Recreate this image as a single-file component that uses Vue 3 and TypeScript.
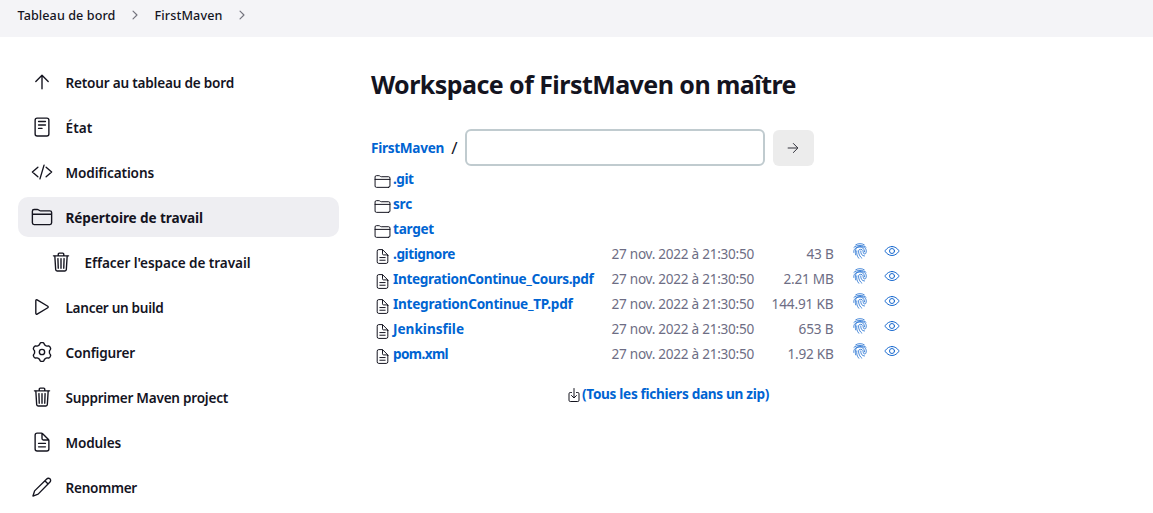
<script setup lang="ts">
import { ref, type Directive } from 'vue'

interface Task { label: string; icon: string; width: number; active?: boolean; nested?: boolean }
interface Entry { name: string; width: number; size?: string; sizeWidth?: number }

// Spreads the letters of a label so that it takes the given width.
const vFit: Directive<HTMLElement, number> = {
  mounted(el, binding) {
    const natural = el.getBoundingClientRect().width
    const count = (el.textContent ?? '').length
    el.style.letterSpacing = `${(binding.value - natural) / count}px`
  },
}

const gear = (() => {
  const points: string[] = []
  for (let i = 0; i < 120; i++) {
    const a = (i / 120) * Math.PI * 2
    const c = Math.cos(6 * (a - Math.PI / 2))
    const r = 196 + 21 * Math.tanh(2 * c) + 3 * c
    points.push(`${(256 + r * Math.cos(a)).toFixed(1)} ${(256 + r * Math.sin(a)).toFixed(1)}`)
  }
  return `M${points.join('L')}Z M318 256a62 62 0 11-124 0a62 62 0 11124 0z`
})()

const icons: Record<string, string> = {
  up: 'M112 244l144-144 144 144M256 120v292',
  reader: 'M144 48h224a48 48 0 0148 48v320a48 48 0 01-48 48H144a48 48 0 01-48-48V96a48 48 0 0148-48zM176 128h160M176 208h160M176 288h80',
  code: 'M160 368L32 256l128-112M352 368l128-112-128-112M304 96l-96 320',
  folder: 'M440 432H72a40 40 0 01-40-40V120a40 40 0 0140-40h75.89a40 40 0 0122.19 6.72l27.84 18.56a40 40 0 0022.19 6.72H440a40 40 0 0140 40v240a40 40 0 01-40 40zM32 192h448',
  trash: 'M112 112l20 320c.95 18.49 14.4 32 32 32h184c17.67 0 30.87-13.51 32-32l20-320M80 112h352M192 112V72a24 24 0 0124-24h80a24 24 0 0124 24v40M256 176v224M184 176l8 224M328 176l-8 224',
  play: 'M112 111v290c0 17.44 17 28.52 31 20.16l247.9-148.37c12.12-7.25 12.12-26.33 0-33.58L143 90.84c-14-8.36-31 2.72-31 20.16z',
  gear,
  document: 'M416 221.25V416a48 48 0 01-48 48H144a48 48 0 01-48-48V96a48 48 0 0148-48h98.75a32 32 0 0122.62 9.37l141.26 141.26a32 32 0 019.37 22.62zM256 56v120a32 32 0 0032 32h120M176 288h160M176 368h160',
  pencil: 'M46 466L84 346 366 68c20-20 52-24 74-2 22 22 22 54 2 74L166 422zM322 112l76 76',
  right: 'M268 112l144 144-144 144M392 256H100',
  chevron: 'M184 112l144 144-144 144',
  eye: 'M255.66 112c-77.94 0-157.89 45.11-220.83 135.33a16 16 0 00-.27 17.77C82.92 340.8 161.8 400 255.66 400c92.84 0 173.34-59.38 221.79-135.25a16.14 16.14 0 000-17.47C428.89 172.28 347.8 112 255.66 112zM336 256a80 80 0 11-160 0a80 80 0 11160 0z',
  download: 'M336 176h40a40 40 0 0140 40v208a40 40 0 01-40 40H136a40 40 0 01-40-40V216a40 40 0 0140-40h40M176 272l80 80 80-80M256 48v288',
  finger: 'M120 56C200 8 312 8 392 56M62 138C150 56 362 56 450 138M56 300C30 60 456 54 456 250C456 320 440 350 406 350C350 350 366 290 350 246C330 186 214 186 210 250C206 350 250 440 316 488M118 380C86 254 112 142 222 130C330 120 396 180 402 280M216 488C158 418 140 342 154 250M280 256C274 350 320 414 400 416',
}

const tasks: Task[] = [
  { label: 'Retour au tableau de bord', icon: 'up', width: 168.5 },
  { label: 'État', icon: 'reader', width: 27 },
  { label: 'Modifications', icon: 'code', width: 88.5 },
  { label: 'Répertoire de travail', icon: 'folder', width: 137.5, active: true },
  { label: "Effacer l'espace de travail", icon: 'trash', width: 166, nested: true },
  { label: 'Lancer un build', icon: 'play', width: 98 },
  { label: 'Configurer', icon: 'gear', width: 69.5 },
  { label: 'Supprimer Maven project', icon: 'trash', width: 162.5 },
  { label: 'Modules', icon: 'document', width: 55.5 },
  { label: 'Renommer', icon: 'pencil', width: 71.5 },
]

const entries: Entry[] = [
  { name: '.git', width: 20.5 },
  { name: 'src', width: 19 },
  { name: 'target', width: 41 },
  { name: '.gitignore', width: 62 },
  { name: 'IntegrationContinue_Cours.pdf', width: 200.5 },
  { name: 'IntegrationContinue_TP.pdf', width: 179.5 },
  { name: 'Jenkinsfile', width: 71 },
  { name: 'pom.xml', width: 55 },
]
const sizes: [string, number][] = [['43 B', 27], ['2.21 MB', 50], ['144.91 KB', 62], ['653 B', 35], ['1.92 KB', 46]]
sizes.forEach(([size, sizeWidth], i) => Object.assign(entries[i + 3], { size, sizeWidth }))

const pattern = ref('')
</script>

<template>
  <div class="page">
    <header class="crumbs">
      <a v-fit="98">Tableau de bord</a>
      <svg viewBox="0 0 512 512"><path :d="icons.chevron" /></svg>
      <a v-fit="68">FirstMaven</a>
      <svg viewBox="0 0 512 512"><path :d="icons.chevron" /></svg>
    </header>
    <div class="body">
      <nav class="tasks">
        <a v-for="task in tasks" :key="task.label" class="task" :class="{ active: task.active, nested: task.nested }">
          <svg viewBox="0 0 512 512"><path :d="icons[task.icon]" /></svg>
          <span v-fit="task.width">{{ task.label }}</span>
        </a>
      </nav>
      <main>
        <h1><span v-fit="425">Workspace of FirstMaven on maître</span></h1>
        <form class="path" @submit.prevent>
          <a v-fit="73" class="link">FirstMaven</a>
          <span class="slash">/</span>
          <input v-model="pattern" type="text">
          <button type="submit"><svg viewBox="0 0 512 512"><path :d="icons.right" /></svg></button>
        </form>
        <div class="files">
          <div v-for="entry in entries" :key="entry.name" class="row">
            <svg class="kind" viewBox="0 0 512 512"><path :d="entry.size ? icons.document : icons.folder" /></svg>
            <div class="name"><a v-fit="entry.width" class="link">{{ entry.name }}</a></div>
            <template v-if="entry.size">
              <div class="date"><span v-fit="142.5">27 nov. 2022 à 21:30:50</span></div>
              <div class="size"><span v-fit="entry.sizeWidth ?? 0">{{ entry.size }}</span></div>
              <svg class="action finger" viewBox="0 0 512 512"><path :d="icons.finger" /></svg>
              <svg class="action" viewBox="0 0 512 512"><path :d="icons.eye" /></svg>
            </template>
          </div>
        </div>
        <div class="zip">
          <svg viewBox="0 0 512 512"><path :d="icons.download" /></svg>
          <a v-fit="187" class="link">(Tous les fichiers dans un zip)</a>
        </div>
      </main>
    </div>
  </div>
</template>

<style>
body { margin: 0; overflow: hidden; background: #fff; }
</style>

<style scoped>
.page { height: 513px; overflow: hidden; color: #14141f; font: 500 13.6px/20px "Noto Sans", "Open Sans", sans-serif; white-space: nowrap; }
svg { display: block; flex: none; fill: none; stroke: currentColor; stroke-width: 32; stroke-linecap: round; stroke-linejoin: round; }
.crumbs { box-sizing: border-box; height: 37px; padding: 0 17.5px 6px; display: flex; align-items: center; background: #f4f4f7; font-size: 12.6px; font-weight: 550; }
.crumbs svg { width: 14px; height: 14px; margin: 0 13px 2px 12px; color: #73737d; stroke-width: 42; }
.body { display: flex; padding: 25px 18px 0; }
.tasks { width: 321px; margin-right: 32px; display: flex; flex-direction: column; gap: 5px; font-weight: 560; }
.task { box-sizing: border-box; height: 40px; padding: 0 12px 0 13px; display: flex; align-items: center; gap: 12.5px; border-radius: 10px; }
.task svg { width: 22px; height: 22px; }
.task span { padding-top: 2px; }
.task.nested { padding-left: 32px; }
.task.active { background: #eeeef2; font-weight: 700; }
h1 { height: 40px; margin: 2px 0 25px; font-size: 25px; line-height: 40px; font-weight: 700; }
.path { display: flex; height: 37px; align-items: center; }
.link { color: #0064d2; font-weight: 700; }
.slash { width: 21px; text-align: center; font-size: 17px; font-weight: 400; }
.path input { box-sizing: border-box; width: 300px; height: 37px; padding: 6px; border: 2px solid #c0cbcf; border-radius: 6px; background: #fff; outline: none; }
.path button { box-sizing: border-box; width: 41px; height: 36px; margin-left: 8px; padding: 0; border: 0; border-radius: 6px; background: #ececec; display: grid; place-items: center; color: #30303a; }
.path button svg { width: 16px; height: 16px; margin-right: 1px; }
.files { height: 201px; }
.row { display: flex; height: 25px; align-items: center; }
.kind { width: 17px; height: 17px; margin: 5px 2px 0 3px; stroke-width: 30; }
.name { width: 218.5px; }
.date { width: 142px; color: #6d6d84; font-weight: 400; }
.size { width: 80px; text-align: right; color: #6d6d84; font-weight: 400; }
.action { width: 16px; height: 16px; margin: 0 0 6px 16px; color: #1769cf; }
.action.finger { margin-left: 18.5px; stroke-width: 25; }
.zip { display: flex; align-items: center; height: 20px; margin: 17px 0 0 195px; }
.zip svg { width: 16px; height: 16px; margin-top: 1px; }
</style>
